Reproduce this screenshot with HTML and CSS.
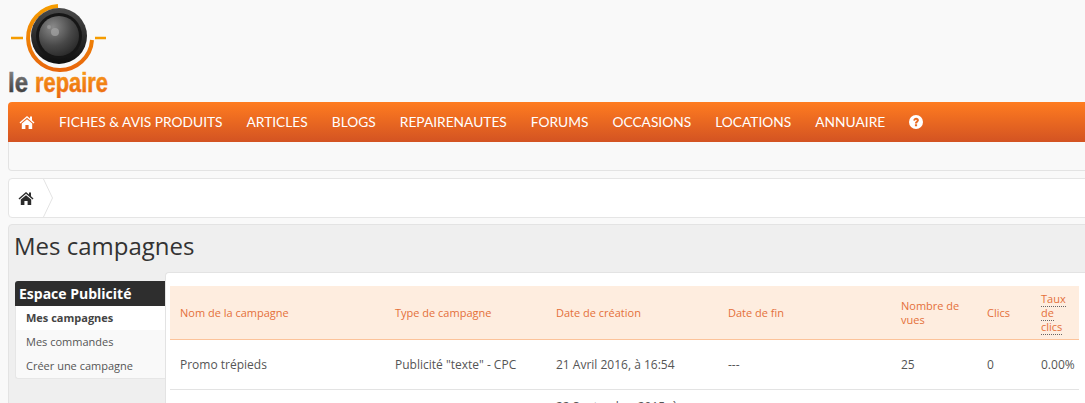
FILE: index.html
```html
<!DOCTYPE html>
<html lang="fr">
<head>
  <meta charset="UTF-8">
  <title>Mes campagnes - Le Repaire</title>
  <link rel="stylesheet" href="styles.css">
</head>
<body>
  <div class="page">
    <header class="logo">
      <svg width="104" height="98" viewBox="0 0 104 98">
        <defs>
          <linearGradient id="lensBody" x1="0" y1="0" x2="0" y2="1">
            <stop offset="0" stop-color="#4a4a4a"/>
            <stop offset="1" stop-color="#0e0e0e"/>
          </linearGradient>
          <radialGradient id="lensGlass" cx="0.35" cy="0.28" r="0.85">
            <stop offset="0" stop-color="#8a8a8a"/>
            <stop offset="0.55" stop-color="#484848"/>
            <stop offset="1" stop-color="#222"/>
          </radialGradient>
          <linearGradient id="ringOrange" x1="0" y1="0" x2="0" y2="1">
            <stop offset="0" stop-color="#f59c00"/>
            <stop offset="1" stop-color="#e8660c"/>
          </linearGradient>
          <linearGradient id="wordGrey" x1="0" y1="0" x2="0" y2="1">
            <stop offset="0" stop-color="#8a8a8a"/>
            <stop offset="1" stop-color="#2f2f2f"/>
          </linearGradient>
          <linearGradient id="wordOrange" x1="0" y1="0" x2="0" y2="1">
            <stop offset="0" stop-color="#f9a11b"/>
            <stop offset="1" stop-color="#ea640e"/>
          </linearGradient>
        </defs>
        <path d="M50 6 A32 32 0 1 0 84 40" fill="none" stroke="url(#ringOrange)" stroke-width="4"/>
        <path d="M3 38 H15 M87 38 H98" stroke="#f59c00" stroke-width="2.5"/>
        <circle cx="51" cy="36" r="28" fill="url(#lensBody)"/>
        <circle cx="51" cy="36" r="23" fill="#161616"/>
        <circle cx="51" cy="36" r="20" fill="url(#lensGlass)"/>
        <circle cx="47" cy="32" r="4" fill="#a5a5a5" opacity=".7"/>
        <circle cx="41" cy="27" r="2" fill="#a5a5a5" opacity=".6"/>
        <text x="0" y="92" class="logo-word" fill="url(#wordGrey)" stroke="url(#wordGrey)" textLength="20" lengthAdjust="spacingAndGlyphs">le</text>
        <text x="27" y="92" class="logo-word" fill="url(#wordOrange)" stroke="url(#wordOrange)" textLength="73" lengthAdjust="spacingAndGlyphs">repaire</text>
      </svg>
    </header>

    <nav class="mainnav">
      <a href="#" class="nav-home">
        <svg width="16" height="14" viewBox="0 0 16 14"><path d="M8 1 L0.5 7.4 1.4 8.4 8 2.8 14.6 8.4 15.5 7.4 13 5.3 V1.5 H11 V3.6 Z M2.8 8.6 V14 H6.4 V10 H9.6 V14 H13.2 V8.6 L8 4.2 Z" fill="#fff"/></svg>
      </a>
      <a href="#">FICHES &amp; AVIS PRODUITS</a>
      <a href="#">ARTICLES</a>
      <a href="#">BLOGS</a>
      <a href="#">REPAIRENAUTES</a>
      <a href="#">FORUMS</a>
      <a href="#">OCCASIONS</a>
      <a href="#">LOCATIONS</a>
      <a href="#">ANNUAIRE</a>
      <a href="#" class="nav-help">
        <svg width="14" height="14" viewBox="0 0 14 14"><circle cx="7" cy="7" r="7" fill="#fff"/><path d="M4.3 5.4 C4.5 3.7 5.7 2.8 7.1 2.8 C8.7 2.8 9.9 3.8 9.9 5.2 C9.9 7 8.1 7 8.1 8.5 H5.9 C5.9 6.3 7.8 6.3 7.8 5.4 C7.8 5 7.5 4.7 7 4.7 C6.5 4.7 6.3 5 6.1 5.8 Z M5.9 9.2 H8.1 V11.2 H5.9 Z" fill="#e8691f"/></svg>
      </a>
    </nav>
    <div class="subnav"></div>

    <div class="breadcrumb">
      <a href="#" class="crumb-home">
        <svg width="16" height="14" viewBox="0 0 16 14"><path d="M8 1 L0.5 7.4 1.4 8.4 8 2.8 14.6 8.4 15.5 7.4 13 5.3 V1.5 H11 V3.6 Z M2.8 8.6 V14 H6.4 V10 H9.6 V14 H13.2 V8.6 L8 4.2 Z" fill="#2b2b2b"/></svg>
      </a>
      <svg class="crumb-sep" width="11" height="38" viewBox="0 0 11 38"><path d="M0.5 0 L9.5 19 0.5 38" fill="none" stroke="#e3e3e3"/></svg>
    </div>

    <main class="main">
      <h1>Mes campagnes</h1>
      <div class="columns">
        <aside class="sidebox">
          <h2>Espace Publicité</h2>
          <ul>
            <li class="active"><a href="#">Mes campagnes</a></li>
            <li><a href="#">Mes commandes</a></li>
            <li><a href="#">Créer une campagne</a></li>
          </ul>
        </aside>
        <section class="panel">
          <table>
            <thead>
              <tr>
                <th class="col-name">Nom de la campagne</th>
                <th class="col-type">Type de campagne</th>
                <th class="col-start">Date de création</th>
                <th class="col-end">Date de fin</th>
                <th class="col-views">Nombre de vues</th>
                <th class="col-clicks">Clics</th>
                <th class="col-rate"><span class="abbr">Taux</span> <span class="abbr">de</span> <span class="abbr">clics</span></th>
              </tr>
            </thead>
            <tbody>
              <tr>
                <td>Promo trépieds</td>
                <td>Publicité "texte" - CPC</td>
                <td>21 Avril 2016, à 16:54</td>
                <td>---</td>
                <td>25</td>
                <td>0</td>
                <td>0.00%</td>
              </tr>
              <tr>
                <td></td>
                <td></td>
                <td class="cell-top">22 Septembre 2015, à</td>
                <td></td>
                <td></td>
                <td></td>
                <td></td>
              </tr>
            </tbody>
          </table>
        </section>
      </div>
    </main>
  </div>
</body>
</html>
```

FILE: styles.css
```css
html, body {
  margin: 0;
  padding: 0;
  height: 403px;
  overflow: hidden;
}
body {
  background-color: #f9f9f9;
  font-family: "Open Sans", sans-serif;
  font-size: 12px;
  color: #555;
}
a {
  color: inherit;
  text-decoration: none;
}
.page {
  width: 1110px;
  margin-left: 8px;
}
.logo {
  height: 102px;
}
.logo svg {
  display: block;
}
.logo-word {
  font-family: "Liberation Sans", sans-serif;
  font-size: 27px;
  font-weight: bold;
  stroke-width: 0.5;
}

.mainnav {
  display: flex;
  align-items: center;
  height: 40px;
  padding-left: 11px;
  gap: 24px;
  background: linear-gradient(#ff7c20, #d35322);
  border-radius: 4px 0 0 0;
  font-family: Lato, sans-serif;
  font-size: 13.75px;
  color: #fff;
}
.mainnav a {
  display: flex;
  padding-bottom: 2px;
  white-space: nowrap;
}
.mainnav .nav-home,
.mainnav .nav-help {
  padding-bottom: 0;
}
.subnav {
  height: 28px;
  background: #f9f9f9;
  border: 1px solid #e3e3e3;
  border-top: 0;
  border-radius: 0 0 4px 4px;
}

.breadcrumb {
  display: flex;
  align-items: center;
  height: 38px;
  margin-top: 7px;
  background: #fff;
  border: 1px solid #e5e5e5;
  border-radius: 4px;
}
.crumb-home {
  display: flex;
  padding: 0 9px;
}
.crumb-sep {
  display: block;
}

.main {
  margin-top: 6px;
  height: 300px;
  background: #efefef;
  border: 1px solid #e3e3e3;
  border-radius: 4px;
}
.main h1 {
  margin: 0;
  padding: 5px 0 0 5px;
  height: 42px;
  font-size: 24px;
  line-height: 31px;
  font-weight: normal;
  color: #333;
}
.columns {
  display: flex;
  align-items: flex-start;
}
.sidebox {
  width: 150px;
  margin: 9px 0 0 6px;
  flex: none;
}
.sidebox h2 {
  margin: 0;
  height: 25px;
  padding-left: 4px;
  background: #2e2e2e;
  border-radius: 3px 0 0 0;
  font-size: 14px;
  line-height: 25px;
  font-weight: bold;
  color: #fff;
}
.sidebox ul {
  margin: 0;
  padding: 0;
  list-style: none;
  background: #f9f9f9;
  border: 1px solid #e6e6e6;
  border-width: 0 0 1px 1px;
  border-radius: 0 0 0 3px;
}
.sidebox li {
  height: 24px;
  padding-left: 10px;
  font-size: 11px;
  line-height: 24px;
}
.sidebox li.active {
  background: #fff;
  font-weight: bold;
  color: #444;
}

.panel {
  flex: 1;
  height: 300px;
  padding-top: 13px;
  padding-left: 4px;
  background: #fff;
  border-top: 1px solid #e3e3e3;
  border-left: 1px solid #e3e3e3;
  border-radius: 4px 0 0 0;
}
table {
  table-layout: fixed;
  width: 909px;
  border-collapse: collapse;
  font-size: 12px;
}
th {
  height: 53px;
  padding: 0 10px;
  background: #feeddf;
  border-bottom: 1px solid #fcc39a;
  text-align: left;
  font-size: 11px;
  font-weight: normal;
  line-height: 14px;
  color: #e4703a;
}
td {
  height: 49px;
  padding: 0 10px;
  border-bottom: 1px solid #e3e3e3;
  line-height: 18px;
  color: #555;
}
td.cell-top {
  padding-top: 8px;
  vertical-align: top;
}
.col-name { width: 195px; }
.col-type { width: 141px; }
.col-start { width: 152px; }
.col-end { width: 153px; }
.col-views { width: 66px; }
.col-clicks { width: 34px; }
.col-rate { width: 28px; }
.abbr {
  border-bottom: 1px dotted #666;
}
```
